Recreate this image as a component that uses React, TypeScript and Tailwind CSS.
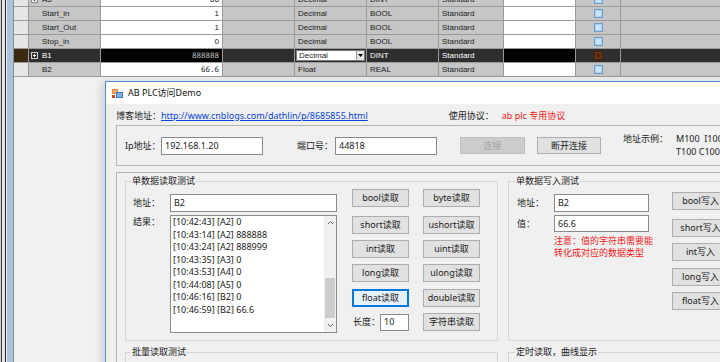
import React from "react";

type Row = {
  name: string;
  value: string;
  fmt: string;
  type: string;
  expand?: boolean;
  selected?: boolean;
  mono?: boolean;
};

const rows: Row[] = [
  { name: "A5", value: "66", fmt: "Decimal", type: "DINT", expand: true },
  { name: "Start_in", value: "1", fmt: "Decimal", type: "BOOL" },
  { name: "Start_Out", value: "1", fmt: "Decimal", type: "BOOL" },
  { name: "Stop_in", value: "0", fmt: "Decimal", type: "BOOL" },
  { name: "B1", value: "888888", fmt: "Decimal", type: "DINT", expand: true, selected: true, mono: true },
  { name: "B2", value: "66.6", fmt: "Float", type: "REAL", mono: true },
];

const logLines = [
  "[10:42:43] [A2] 0",
  "[10:43:14] [A2] 888888",
  "[10:43:24] [A2] 888999",
  "[10:43:35] [A3] 0",
  "[10:43:53] [A4] 0",
  "[10:44:08] [A5] 0",
  "[10:46:16] [B2] 0",
  "[10:46:59] [B2] 66.6",
];

function Expander({ dark }: { dark?: boolean }) {
  return (
    <svg width="7" height="7" viewBox="0 0 7 7" className="mr-[4px] shrink-0">
      <rect x="0.5" y="0.5" width="6" height="6" fill={dark ? "#2e2e2e" : "#e8e8e8"} stroke={dark ? "#d0d0d0" : "#8a8a8a"} />
      <path d="M2 3.5h3M3.5 2v3" stroke={dark ? "#ffffff" : "#333333"} strokeWidth="1" />
    </svg>
  );
}

function CheckIcon({ on }: { on?: boolean }) {
  return (
    <svg width="9" height="9" viewBox="0 0 9 9">
      <rect x="0.5" y="0.5" width="8" height="8" fill={on ? "#7a3a1c" : "#a9d2f5"} stroke={on ? "#3a2008" : "#6e9cc8"} />
      <rect x="2" y="2" width="5" height="5" fill={on ? "#5a2810" : "#c8e4fb"} />
    </svg>
  );
}

function GridRow({ r, first }: { r: Row; first?: boolean }) {
  const sel = r.selected;
  const gray = sel ? "bg-[#2e2e2e] text-white" : "bg-[#c6c6c6] text-[#202020]";
  const white = sel ? "bg-black text-[#bdbdbd]" : "bg-white text-[#202020]";
  const cell = "h-full border-r border-[#9a9a9a] flex items-center shrink-0";
  return (
    <div className={`flex h-[14px] border-b border-[#9a9a9a] ${first ? "-mt-[7px]" : ""}`}>
      <div className={`${cell} w-[15px] ${sel ? "bg-[#3b2a12]" : "bg-[#e6e6e6]"}`} />
      <div className={`${cell} w-[72px] pl-[2px] ${gray}`}>
        {r.expand ? <Expander dark={sel} /> : <span className="w-[11px]" />}
        <span>{r.name}</span>
      </div>
      <div className={`${cell} w-[122px] justify-end pr-[3px] ${white} ${r.mono ? "font-['DejaVu_Sans_Mono',monospace] text-[7.5px]" : ""}`}>
        {r.value}
      </div>
      <div className={`${cell} w-[72px] ${gray}`} />
      <div className={`${cell} w-[72px] ${sel ? "bg-[#2e2e2e] p-[1px]" : "bg-[#c6c6c6] pl-[3px] text-[#202020]"}`}>
        {sel ? (
          <div className="flex h-full w-full items-center border border-[#7a7a7a] bg-white text-[#202020]">
            <span className="flex-1 pl-[2px]">{r.fmt}</span>
            <span className="flex h-full w-[8px] items-center justify-center border-l border-[#9a9a9a] bg-[#e6e6e6]">
              <svg width="5" height="3" viewBox="0 0 5 3">
                <path d="M0 0h5L2.5 3z" fill="#000" />
              </svg>
            </span>
          </div>
        ) : (
          r.fmt
        )}
      </div>
      <div className={`${cell} w-[72px] pl-[3px] ${gray}`}>{r.type}</div>
      <div className={`${cell} w-[65px] pl-[3px] ${gray}`}>Standard</div>
      <div className={`${cell} w-[72px] ${white}`} />
      <div className={`${cell} w-[45px] justify-center ${gray}`}>
        <CheckIcon on={sel} />
      </div>
      <div className={`h-full flex-1 ${gray}`} />
    </div>
  );
}

function Btn({
  children,
  className = "",
  focus,
  disabled,
}: {
  children: React.ReactNode;
  className?: string;
  focus?: boolean;
  disabled?: boolean;
}) {
  const look = disabled
    ? "bg-[#cccccc] border-[#bfbfbf] text-[#a0a0a0]"
    : focus
    ? "bg-[#e5f1fb] border-[#0078d7] text-[#1a1a1a] shadow-[inset_0_0_0_1px_#0078d7]"
    : "bg-[#e1e1e1] border-[#adadad] text-[#1a1a1a]";
  return (
    <div className={`flex shrink-0 items-center justify-center border whitespace-nowrap ${look} ${className}`}>
      {children}
    </div>
  );
}

function Field({ value, className = "" }: { value: string; className?: string }) {
  return (
    <div className={`flex shrink-0 items-center border border-[#8a8a8a] bg-white pl-[3px] text-[#1a1a1a] ${className}`}>
      {value}
    </div>
  );
}

function Chevron({ up }: { up?: boolean }) {
  return (
    <svg width="7" height="5" viewBox="0 0 7 5">
      <path d={up ? "M1 4L3.5 1.5L6 4" : "M1 1L3.5 3.5L6 1"} fill="none" stroke="#606060" strokeWidth="1" />
    </svg>
  );
}

export default function App() {
  return (
    <div className="flex h-[362px] w-[720px] overflow-hidden bg-[#f0f1f1] font-['Noto_Sans','Noto_Sans_CJK_SC',sans-serif] text-[9px] leading-[12px] text-[#1a1a1a]">
      {/* left edge of the host form */}
      <div className="flex h-full w-[14px] shrink-0">
        <div className="w-[1px] bg-[#cfcfcf]" />
        <div className="w-[1px] bg-[#404040]" />
        <div className="w-[3px] bg-[#e4e4e4]" />
        <div className="w-[1px] bg-[#2a2a2a]" />
        <div className="w-[1px] bg-[#eeeeee]" />
        <div className="w-[6px] bg-[#a9c3db]" />
        <div className="w-[1px] bg-[#8c8c8c]" />
      </div>

      <div className="flex min-w-0 flex-1 flex-col">
        {/* tag grid */}
        <div className="font-['Liberation_Sans',sans-serif] text-[8px] leading-[10px]">
          {rows.map((r, i) => (
            <GridRow key={r.name} r={r} first={i === 0} />
          ))}
        </div>

        {/* demo window */}
        <div className="ml-[91px] mt-[4px] h-[300px] w-[700px] shrink-0 border border-[#4a90d9] bg-[#f0f0f0] shadow-[-4px_0_8px_rgba(0,0,0,0.12)]">
          <div className="flex h-[22px] items-center bg-white pl-[6px]">
            <svg width="11" height="11" viewBox="0 0 11 11">
              <rect x="0" y="1" width="6" height="5" fill="#e8863a" />
              <rect x="1" y="2" width="4" height="3" fill="#f5b070" />
              <rect x="4" y="4" width="7" height="6" fill="#3d7cc4" />
              <rect x="5" y="5" width="5" height="4" fill="#7fb0e6" />
              <rect x="0" y="7" width="3" height="3" fill="#c94a2a" />
            </svg>
            <span className="ml-[5px] text-[#111]">AB PLC访问Demo</span>
          </div>

          <div className="pl-[10px] pt-[5px]">
            <div className="flex h-[14px] items-center whitespace-nowrap">
              <span className="w-[45px]">博客地址：</span>
              <span className="text-[#0645d8] underline">http://www.cnblogs.com/dathlin/p/8685855.html</span>
              <span className="ml-[81px] w-[53px]">使用协议：</span>
              <span className="text-[#f02020]">ab plc 专用协议</span>
            </div>

            {/* connection panel */}
            <div className="mt-[2px] flex h-[41px] items-start border border-[#b4b4b4] pl-[8px] pt-[11px] whitespace-nowrap">
              <span className="flex h-[18px] w-[36px] items-center">Ip地址：</span>
              <Field value="192.168.1.20" className="h-[18px] w-[102px]" />
              <span className="ml-[34px] flex h-[18px] w-[38px] items-center">端口号：</span>
              <Field value="44818" className="h-[18px] w-[102px]" />
              <Btn disabled className="ml-[23px] h-[17px] w-[65px]">连接</Btn>
              <Btn className="ml-[12px] h-[17px] w-[64px]">断开连接</Btn>
              <div className="-mt-[5px] ml-[22px] flex leading-[13px]">
                <span className="w-[53px]">地址示例：</span>
                <span>
                  M100&nbsp;&nbsp;I100
                  <br />
                  T100 C100
                </span>
              </div>
            </div>

            {/* main panel */}
            <div className="mt-[6px] h-[200px] border border-[#b4b4b4] pl-[8px] pt-[2px]">
              <div className="flex">
                {/* single read */}
                <fieldset className="w-[373px] shrink-0 border border-[#d5d5d5] pb-[7px] pl-[7px]">
                  <legend className="ml-[-2px] px-[1px] leading-[12px]">单数据读取测试</legend>
                  <div className="flex">
                    <div className="flex flex-col">
                      <div className="mt-[7px] flex items-center">
                        <span className="w-[37px]">地址：</span>
                        <Field value="B2" className="h-[18px] w-[167px]" />
                      </div>
                      <div className="mt-[3px] flex items-start">
                        <span className="w-[37px] pt-[1px]">结果：</span>
                        <div className="flex h-[118px] w-[167px] border border-[#8a8a8a] bg-white">
                          <div className="flex-1 pl-[2px] leading-[12.5px] whitespace-nowrap">
                            {logLines.map((l) => (
                              <div key={l}>{l}</div>
                            ))}
                          </div>
                          <div className="flex w-[12px] flex-col bg-[#f0f0f0]">
                            <div className="flex h-[13px] items-center justify-center">
                              <Chevron up />
                            </div>
                            <div className="flex-1">
                              <div className="ml-[1px] mt-[49px] h-[40px] w-[10px] bg-[#cdcdcd]" />
                            </div>
                            <div className="flex h-[13px] items-center justify-center">
                              <Chevron />
                            </div>
                          </div>
                        </div>
                      </div>
                    </div>

                    <div className="ml-[15px] mt-[2px] flex flex-col whitespace-nowrap">
                      <div className="flex gap-[14px]">
                        <Btn className="h-[18px] w-[57px]">bool读取</Btn>
                        <Btn className="h-[18px] w-[57px]">byte读取</Btn>
                      </div>
                      <div className="mt-[9px] flex gap-[14px]">
                        <Btn className="h-[18px] w-[57px]">short读取</Btn>
                        <Btn className="h-[18px] w-[57px]">ushort读取</Btn>
                      </div>
                      <div className="mt-[6px] flex gap-[14px]">
                        <Btn className="h-[18px] w-[57px]">int读取</Btn>
                        <Btn className="h-[18px] w-[57px]">uint读取</Btn>
                      </div>
                      <div className="mt-[6px] flex gap-[14px]">
                        <Btn className="h-[18px] w-[57px]">long读取</Btn>
                        <Btn className="h-[18px] w-[57px]">ulong读取</Btn>
                      </div>
                      <div className="mt-[7px] flex gap-[14px]">
                        <Btn focus className="h-[18px] w-[57px]">float读取</Btn>
                        <Btn className="h-[18px] w-[57px]">double读取</Btn>
                      </div>
                      <div className="mt-[6px] flex items-center gap-[14px]">
                        <div className="flex w-[57px] items-center">
                          <span className="w-[30px] pl-[1px]">长度：</span>
                          <Field value="10" className="h-[17px] w-[29px]" />
                        </div>
                        <Btn className="h-[18px] w-[57px]">字符串读取</Btn>
                      </div>
                    </div>
                  </div>
                </fieldset>

                {/* single write */}
                <fieldset className="ml-[10px] w-[300px] shrink-0 border border-[#d5d5d5] pb-[7px] pl-[8px]">
                  <legend className="ml-[-2px] px-[1px] leading-[12px]">单数据写入测试</legend>
                  <div className="flex">
                    <div className="flex flex-col">
                      <div className="mt-[7px] flex items-center">
                        <span className="w-[37px]">地址：</span>
                        <Field value="B2" className="h-[18px] w-[95px]" />
                      </div>
                      <div className="mt-[3px] flex items-center">
                        <span className="w-[37px]">值：</span>
                        <Field value="66.6" className="h-[17px] w-[95px]" />
                      </div>
                      <div className="ml-[37px] mt-[3px] text-[#f02020]">
                        注意：值的字符串需要能
                        <br />
                        转化成对应的数据类型
                      </div>
                    </div>
                    <div className="ml-[19px] mt-[5px] flex flex-col whitespace-nowrap">
                      <Btn className="h-[18px] w-[57px]">bool写入</Btn>
                      <Btn className="mt-[9px] h-[18px] w-[57px]">short写入</Btn>
                      <Btn className="mt-[6px] h-[18px] w-[57px]">int写入</Btn>
                      <Btn className="mt-[7px] h-[18px] w-[57px]">long写入</Btn>
                      <Btn className="mt-[6px] h-[18px] w-[57px]">float写入</Btn>
                    </div>
                  </div>
                </fieldset>
              </div>

              <div className="mt-[5px] flex">
                <fieldset className="h-[60px] w-[373px] shrink-0 border border-[#d5d5d5] pl-[7px]">
                  <legend className="ml-[-2px] px-[1px] leading-[12px]">批量读取测试</legend>
                </fieldset>
                <fieldset className="ml-[10px] h-[60px] w-[300px] shrink-0 border border-[#d5d5d5] pl-[8px]">
                  <legend className="ml-[-2px] px-[1px] leading-[12px]">定时读取，曲线显示</legend>
                </fieldset>
              </div>
            </div>
          </div>
        </div>
      </div>
    </div>
  );
}
